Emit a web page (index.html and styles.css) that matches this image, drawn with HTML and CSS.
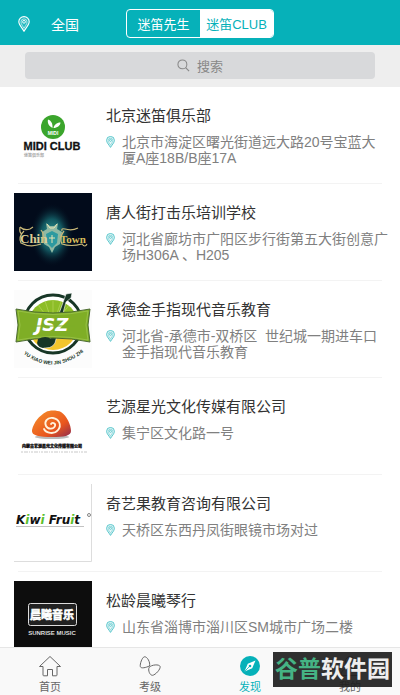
FILE: index.html
```html
<!DOCTYPE html>
<html lang="zh-CN">
<head>
    <meta charset="UTF-8">
    <meta name="viewport" content="width=device-width, initial-scale=1.0">
    <title>迷笛CLUB</title>
    <link rel="stylesheet" href="styles.css">
</head>
<body>

<!-- shared map pin -->
<svg class="sprite" aria-hidden="true">
    <symbol id="pin" viewBox="0 0 12 16">
        <path d="M6 15.200C4.600 12.600.8 9 .8 5.800a5.200 5.200 0 0 1 10.400 0c0 3.200-3.800 6.800-5.200 9.400z" fill="currentColor" fill-opacity=".12" stroke="currentColor" stroke-width="1.100"/>
        <path d="M6 12.400C5 10.400 3 8.200 3 5.900a3 3 0 0 1 6 0c0 2.300-2 4.500-3 6.500z" fill="none" stroke="currentColor" stroke-width=".6"/>
        <circle cx="6" cy="5.800" r="1.400" fill="none" stroke="currentColor" stroke-width=".9"/>
    </symbol>
</svg>

<header class="header">
    <button class="city" type="button">
        <svg class="city-pin"><use href="#pin"/></svg>
        <span>全国</span>
    </button>
    <div class="tabs">
        <button class="tab" type="button">迷笛先生</button>
        <button class="tab active" type="button">迷笛CLUB</button>
    </div>
</header>

<div class="search-bar">
    <label class="search">
        <svg class="search-icon" viewBox="0 0 14 14">
            <circle cx="5.800" cy="5.800" r="4.800" fill="none" stroke="currentColor" stroke-width="1.100"/>
            <path d="M9.300 9.300L13 13" stroke="currentColor" stroke-width="1.300"/>
        </svg>
        <input class="search-input" type="text" placeholder="搜索" aria-label="搜索">
    </label>
</div>

<main class="content">
    <ul class="list">
        <li>
            <a class="club" href="#">
                <svg class="thumb" viewBox="0 0 78 78">
                    <rect width="78" height="78" fill="#fff"/>
                    <circle cx="39" cy="31" r="12" fill="#3ba52c"/>
                    <path d="M38.500 32c-3-1.500-5.500-4.500-4.500-8.500 3 1 5 4 4.500 8.500zM39.500 32c.5-3 3-5.500 7-5.500 0 3-3.500 5.500-7 5.500z" fill="#fff"/>
                    <text class="logo-sans" x="39" y="39" font-size="5" fill="#fff" text-anchor="middle">MIDI</text>
                    <text class="logo-sans" x="38" y="54" font-size="11" fill="#111" stroke="#111" stroke-width=".3" text-anchor="middle">MIDI CLUB</text>
                    <text class="logo-cjk" x="10" y="61" font-size="4" fill="#aaa">迷笛俱乐部</text>
                </svg>
                <div class="info">
                    <h2 class="name">北京迷笛俱乐部</h2>
                    <p class="address"><svg class="pin"><use href="#pin"/></svg><span>北京市海淀区曙光街道远大路20号宝蓝大<br>厦A座18B/B座17A</span></p>
                </div>
            </a>
        </li>
        <li>
            <a class="club" href="#">
                <svg class="thumb" viewBox="0 0 78 78">
                    <defs>
                        <radialGradient id="glow">
                            <stop offset="0" stop-color="#2c9a98"/>
                            <stop offset=".5" stop-color="#12565f"/>
                            <stop offset="1" stop-color="#020b1b" stop-opacity="0"/>
                        </radialGradient>
                    </defs>
                    <rect width="78" height="78" fill="#020b1b"/>
                    <ellipse cx="38" cy="42" rx="22" ry="32" fill="url(#glow)"/>
                    <path d="M32 30l4 3h4l4-3-1 6 5 3-2 12-5 3-3 6-3-6-5-3-2-12 5-3z" fill="#8fb9a4"/>
                    <path d="M38 38l6 3-1 9-5 5-5-5-1-9z" fill="#2d9aa0"/>
                    <path d="M33 31l3 4h4l3-4M38 42v8M35 45h6" fill="none" stroke="#e9e3b4"/>
                    <text class="logo-serif" x="6" y="50" font-size="13" fill="#dccf96">Chin</text>
                    <text class="logo-serif" x="46" y="50" font-size="11" fill="#d8bd5a">Town</text>
                    <path d="M6 34q-1 6 2 7M6 34q4 4 10 2l3-2M10 38q-6 6-3 12 9 5 20 1M27 37l2 3v10M48 38q-1-3 3-2 7 2 13-1M50 38q-5 6-2 13 9 3 20 0 3 4 5 0" fill="none" stroke="#c9b878" stroke-width="1.200"/>
                </svg>
                <div class="info">
                    <h2 class="name">唐人街打击乐培训学校</h2>
                    <p class="address"><svg class="pin"><use href="#pin"/></svg><span>河北省廊坊市广阳区步行街第五大街创意广<br>场H306A 、H205</span></p>
                </div>
            </a>
        </li>
        <li>
            <a class="club" href="#">
                <svg class="thumb" viewBox="0 0 78 78">
                    <defs>
                        <path id="arc" d="M6 61Q39 89 73 59"/>
                        <clipPath id="disc"><circle cx="39" cy="35" r="25"/></clipPath>
                    </defs>
                    <rect width="78" height="78" fill="#fcfcfc"/>
                    <circle cx="39" cy="34" r="29" fill="#fff" stroke="#173626" stroke-width="3"/>
                    <g clip-path="url(#disc)">
                        <rect x="14" y="10" width="50" height="30" fill="#8dbd27"/>
                        <rect x="14" y="40" width="50" height="20" fill="#f4c62c"/>
                        <path d="M39 35L22 12M39 35L30 8M39 35V8M39 35L48 9M39 35L57 13" stroke="#a9cd4b"/>
                    </g>
                    <path d="M52 4l6-1-1 5-5 4-11 41q-4 7-14 4-4-3 0-7 5-3 9-1z" fill="#173626" stroke="#fff" stroke-width=".6"/>
                    <path d="M2 19q37 8 74 0l-2 16 2 17q-37-8-74 0l2-17z" fill="#7fae26" stroke="#4c6b32"/>
                    <path d="M4 21q35 7 70 0l-2 14 2 15q-35-7-70 0l2-15z" fill="none" stroke="#a8cc5c" stroke-width=".6"/>
                    <path d="M24 49q8-4 13 0 1 7-8 9-8-1-5-9z" fill="#173626"/>
                    <text class="logo-jsz" x="38" y="41" font-size="18" fill="#fff" text-anchor="middle">JSZ</text>
                    <path d="M16 36h45" stroke="#7fae26" stroke-width="1"/>
                    <text class="logo-sans" font-size="5" fill="#173626"><textPath href="#arc" startOffset="50%" text-anchor="middle">YU XIAO WEI JIN SHOU ZHI</textPath></text>
                </svg>
                <div class="info">
                    <h2 class="name">承德金手指现代音乐教育</h2>
                    <p class="address"><svg class="pin"><use href="#pin"/></svg><span>河北省-承德市-双桥区&nbsp; 世纪城一期进车口<br>金手指现代音乐教育</span></p>
                </div>
            </a>
        </li>
        <li>
            <a class="club" href="#">
                <svg class="thumb" viewBox="0 0 78 78">
                    <defs>
                        <linearGradient id="stone" x1="0" y1="0" x2="1" y2="1">
                            <stop offset="0" stop-color="#f6922b"/>
                            <stop offset=".65" stop-color="#e9561d"/>
                            <stop offset="1" stop-color="#8d2a50"/>
                        </linearGradient>
                    </defs>
                    <rect width="78" height="78" fill="#fff"/>
                    <ellipse cx="38" cy="50" rx="17" ry="2" fill="#bbb"/>
                    <path d="M18 43c2-8 7-14 14-18 3-2 11-2 15 0 6 4 10 13 10 19 0 5-7 6-19 6s-21-1-20-7z" fill="url(#stone)"/>
                    <path d="M37 37c1-2 5-1 4 2s-7 4-9 0 1-9 7-8 9 7 5 12-12 3-14-1" fill="none" stroke="#fff3dd" stroke-width="1.800" stroke-linecap="round"/>
                    <text class="logo-cjk" x="38" y="61" font-size="4" fill="#111" stroke="#111" stroke-width=".3" text-anchor="middle">内蒙古艺源星光文化传媒有限公司</text>
                    <path d="M7 65h66" stroke="#bbb" stroke-width=".8" stroke-dasharray="2 1 4 1 1 1"/>
                </svg>
                <div class="info">
                    <h2 class="name">艺源星光文化传媒有限公司</h2>
                    <p class="address"><svg class="pin"><use href="#pin"/></svg><span>集宁区文化路一号</span></p>
                </div>
            </a>
        </li>
        <li>
            <a class="club" href="#">
                <svg class="thumb" viewBox="0 0 78 78">
                    <rect width="78" height="78" fill="#fff"/>
                    <path d="M0 77.500h77.500V0" fill="none" stroke="#ddd"/>
                    <text class="logo-kiwi" x="2" y="40" font-size="12" fill="#111">K<tspan fill="#5cc02c">i</tspan>w<tspan fill="#5cc02c">i</tspan> Fru<tspan fill="#5cc02c">i</tspan>t</text>
                    <path d="M2 42.500h68" stroke="#999" stroke-width=".6"/>
                    <circle cx="75" cy="31" r="1.500" fill="none" stroke="#666" stroke-width=".8"/>
                </svg>
                <div class="info">
                    <h2 class="name">奇艺果教育咨询有限公司</h2>
                    <p class="address"><svg class="pin"><use href="#pin"/></svg><span>天桥区东西丹凤街眼镜市场对过</span></p>
                </div>
            </a>
        </li>
        <li>
            <a class="club" href="#">
                <svg class="thumb" viewBox="0 0 78 78">
                    <rect width="78" height="78" fill="#0d0d0d"/>
                    <rect x="14.500" y="22.500" width="48" height="22" rx="2" fill="#222" stroke="#ddd"/>
                    <text class="logo-cjk" x="38" y="38" font-size="11" fill="#fff" stroke="#fff" stroke-width=".6" text-anchor="middle">晨曦音乐</text>
                    <text class="logo-sans" x="38" y="54" font-size="6" fill="#ddd" text-anchor="middle">SUNRISE MUSIC</text>
                </svg>
                <div class="info">
                    <h2 class="name">松龄晨曦琴行</h2>
                    <p class="address"><svg class="pin"><use href="#pin"/></svg><span>山东省淄博市淄川区SM城市广场二楼</span></p>
                </div>
            </a>
        </li>
    </ul>
</main>

<nav class="nav">
    <a class="nav-item" href="#">
        <svg class="nav-icon" viewBox="0 0 24 22">
            <path d="M1.500 11.500L12 1.500l10.500 10h-3.500v8.500q0 .8-.8.800h-3.700v-6.300h-5v6.300H5.800q-.8 0-.8-.8v-8.500z" fill="none" stroke="currentColor" stroke-width="1" stroke-linejoin="round"/>
        </svg>
        <span>首页</span>
    </a>
    <a class="nav-item" href="#">
        <svg class="nav-icon" viewBox="0 0 24 22">
            <path d="M11.500 11C8 12.500 3 14 2.300 11.500 1.800 9 4 2.500 6.300 1.800c3-.5 6.200 5.700 5.200 9.200zM11 12.500c2.500-3 10.300-3.500 11.100-1 .7 2.500-4.600 8.500-7.600 8.800-2.800 0-4.500-4.800-3.500-7.800z" fill="none" stroke="currentColor" stroke-width="1"/>
        </svg>
        <span>考级</span>
    </a>
    <a class="nav-item active" href="#">
        <svg class="nav-icon" viewBox="0 0 24 22">
            <circle cx="12" cy="11" r="10" fill="currentColor"/>
            <path d="M17.500 5.500l-3.300 7.700-7.700 3.300 3.300-7.700z" fill="#fff"/>
            <path d="M6.500 16.500l6-6" stroke="#06b1b9" stroke-width=".8"/>
            <circle cx="12" cy="11" r="1.300" fill="#06b1b9"/>
        </svg>
        <span>发现</span>
    </a>
    <a class="nav-item" href="#">
        <svg class="nav-icon" viewBox="0 0 24 22">
            <circle cx="12" cy="6" r="4.500" fill="none" stroke="currentColor"/>
            <path d="M3 20.500c0-5 4-8 9-8s9 3 9 8z" fill="none" stroke="currentColor"/>
        </svg>
        <span>我的</span>
    </a>
</nav>

<div class="watermark"><span class="watermark-green">谷普</span>软件园</div>

</body>
</html>
```

FILE: styles.css
```css
* {
    box-sizing: border-box;
}
body {
    display: flex;
    flex-direction: column;
    height: 100vh;
    margin: 0;
    background: #fff;
    color: #333;
    font-family: "Liberation Sans", "Noto Sans CJK SC", sans-serif;
}
button {
    padding: 0;
    border: none;
    background: none;
    color: inherit;
    font-family: inherit;
    cursor: pointer;
}
a {
    color: inherit;
    text-decoration: none;
}
.sprite {
    display: none;
}

/* header */
.header {
    display: grid;
    grid-template-columns: 1fr auto 1fr;
    align-items: center;
    height: 45px;
    padding: 2px 18px 0;
    background: #06b1b9;
    color: #fff;
}
.city {
    display: flex;
    align-items: center;
    gap: 21px;
    font-size: 14px;
}
.city-pin {
    width: 12px;
    height: 16px;
}
.tabs {
    display: flex;
    height: 29px;
    border: 1px solid #fff;
    border-radius: 4px;
    overflow: hidden;
}
.tab {
    width: 73px;
    font-size: 13px;
}
.tab.active {
    background: #fff;
    color: #06b1b9;
}

/* search */
.search-bar {
    padding: 7px 25px 8px;
    background: #eee;
}
.search {
    display: flex;
    align-items: center;
    justify-content: center;
    gap: 7px;
    height: 27px;
    border-radius: 4px;
    background: #d8d9db;
    color: #888;
}
.search-icon {
    width: 13px;
    height: 13px;
}
.search-input {
    field-sizing: content;
    min-width: 26px;
    padding: 0;
    border: none;
    outline: none;
    background: none;
    color: #333;
    font-family: inherit;
    font-size: 13px;
}
.search-input::placeholder {
    color: #888;
}

/* club list */
.content {
    flex: 1;
    min-height: 0;
    overflow: hidden;
}
.list {
    margin: 0;
    padding: 0;
    list-style: none;
}
.list li::after {
    content: "";
    display: block;
    height: 1px;
    margin: 0 18px;
    background: #f3f3f3;
}
.club {
    display: flex;
    gap: 14px;
    padding: 9px 0 9px 14px;
}
.thumb {
    flex: none;
    width: 78px;
    height: 78px;
}
.info {
    padding-top: 10px;
}
.name {
    margin: 0 0 8px;
    font-size: 15px;
    font-weight: normal;
    line-height: 20px;
}
.address {
    display: flex;
    gap: 7px;
    margin: 0;
    color: #808080;
    font-size: 14px;
    line-height: 16px;
    white-space: nowrap;
}
.pin {
    flex: none;
    width: 9px;
    height: 12px;
    margin-top: 2px;
    color: #3cbcc2;
}

/* lettering inside the logos */
.logo-sans {
    font-family: "Liberation Sans", sans-serif;
    font-weight: bold;
}
.logo-serif {
    font-family: "Liberation Serif", serif;
    font-weight: bold;
}
.logo-cjk {
    font-family: "Noto Sans CJK SC", sans-serif;
    font-weight: bold;
}
.logo-jsz,
.logo-kiwi {
    font-family: "DejaVu Sans", sans-serif;
    font-style: italic;
    font-weight: bold;
}

/* bottom nav */
.nav {
    display: flex;
    height: 48px;
    border-top: 1px solid #e6e6e6;
    background: #f9f9f9;
}
.nav-item {
    display: flex;
    flex: 1;
    flex-direction: column;
    align-items: center;
    gap: 2px;
    padding-top: 7px;
    color: #666;
    font-size: 11px;
    line-height: 16px;
}
.nav-icon {
    width: 24px;
    height: 22px;
}
.nav-item.active {
    color: #06b1b9;
}

.watermark {
    position: absolute;
    right: 8px;
    bottom: 8px;
    padding: 0 2px;
    background: rgba(30, 30, 30, 0.92);
    color: #eee;
    font-size: 23px;
    font-weight: bold;
    line-height: 35px;
}
.watermark-green {
    color: #45b384;
}
```
